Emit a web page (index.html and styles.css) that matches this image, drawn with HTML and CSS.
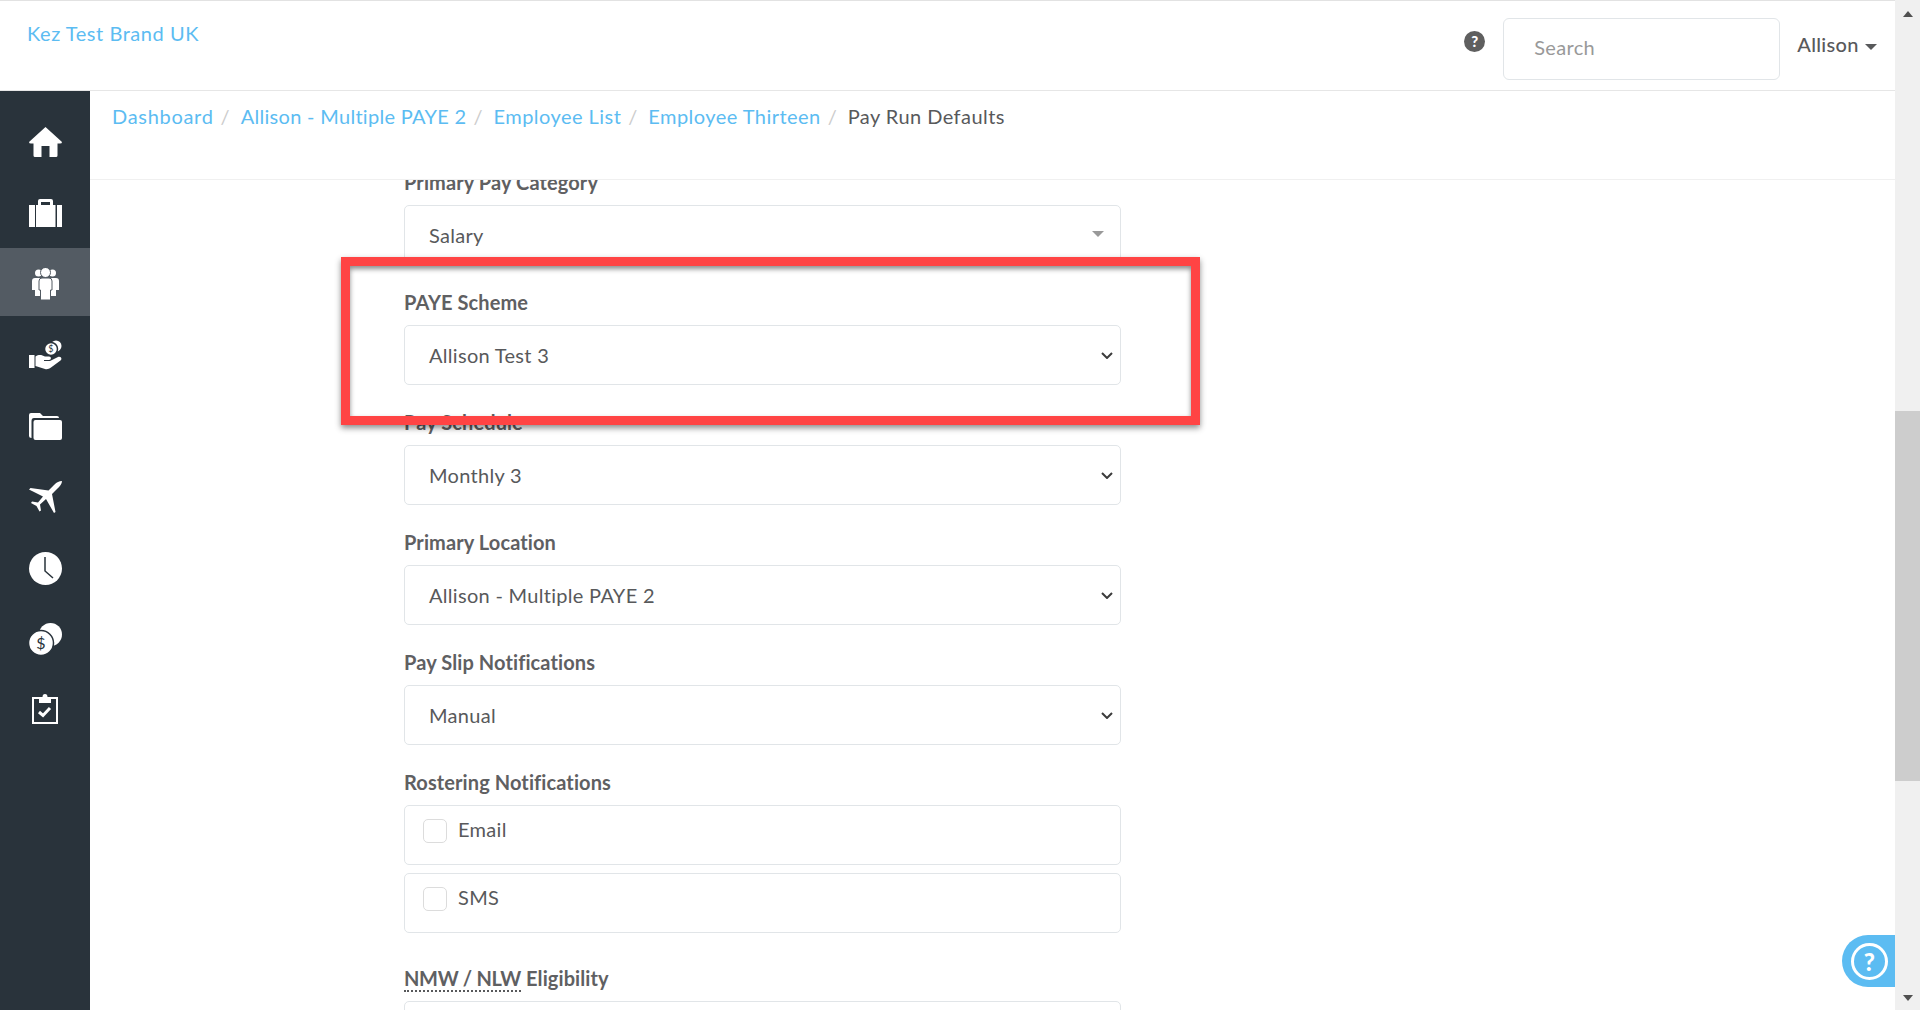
FILE: index.html
```html
<!DOCTYPE html>
<html lang="en">
<head>
  <meta charset="UTF-8">
  <title>Pay Run Defaults</title>
  <link rel="stylesheet" href="styles.css">
</head>
<body>
  <div class="app">
    <header class="topbar">
      <a class="brand">Kez Test Brand UK</a>
      <div class="topbar-right">
        <span class="help-dot">?</span>
        <div class="search">Search</div>
        <div class="user">Allison <span class="caret"></span></div>
      </div>
    </header>

    <div class="body-row">
      <nav class="sidebar">
        <a class="nav-item">
          <svg width="33" height="30" viewBox="0 0 33 30"><path d="M16.5 0 L33 15 Q33 16.5 31 16.5 H28.5 V28.5 Q28.5 30 27 30 H20.5 V19 H12.5 V30 H6 Q4.5 30 4.5 28.5 V16.5 H2 Q0 16.5 0 15 Z"/></svg>
        </a>
        <a class="nav-item">
          <svg width="33" height="28" viewBox="0 0 33 28"><rect x="0" y="6" width="6" height="22"/><rect x="28" y="6" width="5" height="22"/><rect x="7" y="6" width="19.500" height="22"/><path d="M9 6 V2 Q9 0 11 0 H22 Q24 0 24 2 V6 H21 V3 H12 V6 Z"/></svg>
        </a>
        <a class="nav-item active">
          <svg width="27" height="32" viewBox="0 0 27 32"><circle cx="6.500" cy="5" r="3.500"/><circle cx="20.500" cy="5" r="3.500"/><path d="M0 13 Q0 10 3 10 H24 Q27 10 27 13 V22 H24 V28 H3 V22 H0 Z"/><circle class="gap-active" cx="13.500" cy="4.500" r="5"/><path class="gap-active" d="M7 13 Q7 10 10 10 H17 Q20 10 20 13 V22 H18.500 V32 H8.500 V22 H7 Z"/></svg>
        </a>
        <a class="nav-item">
          <svg width="33" height="31" viewBox="0 0 33 31"><circle cx="27" cy="6" r="5.500"/><circle class="gap" cx="22" cy="9" r="6.500"/><text class="coin-small" x="22" y="12">$</text><rect x="0" y="15" width="5.500" height="13"/><path d="M6.500 16.500 C10 14 13 15 16 16.500 H20 C22.500 16.500 22.500 20 20 20 H15 V21 H21 L29 17 C32 16 33.500 19 31.500 20.500 L22 27.500 C20 29 18 29.500 16 29 L6.500 26 Z"/></svg>
        </a>
        <a class="nav-item">
          <svg width="33" height="27" viewBox="0 0 33 27"><path d="M0 2 Q0 0 2 0 H11 L14 3 H28 Q30 3 30 5 H5 Q2.500 5 2.500 8 V25 Q0 25 0 23 Z"/><path d="M4.500 9 Q4.500 7 6.500 7 H31 Q33 7 33 9 V25 Q33 27 31 27 H6.500 Q4.500 27 4.500 25 Z"/></svg>
        </a>
        <a class="nav-item">
          <svg width="33" height="32" viewBox="0 0 33 32"><path d="M33 0 C33 3 31 5 28 8 L23 13 L26.500 31 L25 32 L17 18 L11 23.500 L12 29.500 L10.500 30.500 L7.500 25 L2 22 L3 20.500 L9 21.500 L14 15.500 L0 8.500 L1.500 7 L19.500 9.500 L25 4 C28 1 30 0 33 0 Z"/></svg>
        </a>
        <a class="nav-item">
          <svg width="33" height="33" viewBox="0 0 33 33"><circle cx="16.500" cy="16.500" r="16.500"/><path class="hand" d="M16 5 V19 L24 26"/></svg>
        </a>
        <a class="nav-item">
          <svg width="33" height="32" viewBox="0 0 33 32"><circle cx="21.500" cy="11.500" r="11.500"/><circle class="gap" cx="12" cy="20" r="12.500"/><text class="coin-big" x="12" y="25.500">$</text></svg>
        </a>
        <a class="nav-item">
          <svg width="26" height="30" viewBox="0 0 26 30"><path class="clip-line" d="M7 4 H1 V29 H25 V4 H19"/><path d="M10.500 3 Q10.500 0 13 0 Q15.500 0 15.500 3 H19 V9 H7 V3 Z"/><path class="clip-line thick" d="M7 18 L11 21.500 L18 14"/></svg>
        </a>
      </nav>

      <main class="content">
        <div class="breadcrumb">
          <a class="crumb-wide">Dashboard</a><span class="sep">/</span>
          <a class="crumb-tight">Allison - Multiple PAYE 2</a><span class="sep">/</span>
          <a>Employee List</a><span class="sep">/</span>
          <a>Employee Thirteen</a><span class="sep">/</span>
          <span class="current">Pay Run Defaults</span>
        </div>

        <div class="form-scroll">
          <form class="defaults-form">
            <div class="field">
              <label>Primary Pay Category</label>
              <div class="select-box">
                <span>Salary</span>
                <span class="tri"></span>
              </div>
            </div>
            <div class="field">
              <label>PAYE Scheme</label>
              <div class="select-box">
                <span>Allison Test 3</span>
                <svg class="chev" width="12" height="7" viewBox="0 0 12 7"><path d="M1 1 L6 6 L11 1"/></svg>
              </div>
            </div>
            <div class="field">
              <label>Pay Schedule</label>
              <div class="select-box">
                <span>Monthly 3</span>
                <svg class="chev" width="12" height="7" viewBox="0 0 12 7"><path d="M1 1 L6 6 L11 1"/></svg>
              </div>
            </div>
            <div class="field">
              <label>Primary Location</label>
              <div class="select-box">
                <span>Allison - Multiple PAYE 2</span>
                <svg class="chev" width="12" height="7" viewBox="0 0 12 7"><path d="M1 1 L6 6 L11 1"/></svg>
              </div>
            </div>
            <div class="field">
              <label>Pay Slip Notifications</label>
              <div class="select-box">
                <span>Manual</span>
                <svg class="chev" width="12" height="7" viewBox="0 0 12 7"><path d="M1 1 L6 6 L11 1"/></svg>
              </div>
            </div>
            <div class="field field-checks">
              <label>Rostering Notifications</label>
              <div class="check-box"><span class="tick"></span>Email</div>
              <div class="check-box"><span class="tick"></span>SMS</div>
            </div>
            <div class="field">
              <label><abbr>NMW / NLW</abbr> Eligibility</label>
              <div class="select-box"></div>
            </div>
          </form>
        </div>

        <div class="highlight"></div>
      </main>
    </div>
  </div>

  <div class="scrollbar">
    <span class="arrow up"></span>
    <div class="track"><div class="thumb"></div></div>
    <span class="arrow down"></span>
  </div>

  <div class="help-tab"><span class="help-ring">?</span></div>
</body>
</html>
```

FILE: styles.css
```css
html, body {
  height: 100%;
}

body {
  margin: 0;
  display: flex;
  overflow: hidden;
  background: #fff;
  color: #58595b;
  font-family: 'Lato', 'Open Sans', sans-serif;
  font-size: 20px;
  letter-spacing: 0.3px;
}

.app {
  flex: 1;
  min-width: 0;
  display: flex;
  flex-direction: column;
  height: 100%;
}

a {
  color: #5cbcf2;
  text-decoration: none;
}

/* top bar */
.topbar {
  box-sizing: border-box;
  height: 91px;
  flex: none;
  display: flex;
  justify-content: space-between;
  border-top: 1px solid #e2e2e2;
  border-bottom: 1px solid #e6e6e6;
}

.brand {
  margin: 18px 0 0 27px;
  line-height: 28px;
  letter-spacing: 0.55px;
}

.topbar-right {
  display: flex;
  align-items: flex-start;
}

.help-dot {
  width: 21px;
  height: 21px;
  margin-top: 30px;
  border-radius: 50%;
  background: #5f5f5f;
  color: #fff;
  font-size: 15px;
  font-weight: 900;
  line-height: 21px;
  text-align: center;
}

.search {
  box-sizing: border-box;
  width: 277px;
  height: 62px;
  margin: 17px 0 0 18px;
  padding-left: 30px;
  border: 1px solid #e1e5e8;
  border-radius: 6px;
  color: #999;
  line-height: 56px;
}

.user {
  margin: 29px 18px 0 17px;
  line-height: 28px;
  font-weight: 500;
}

.caret {
  display: inline-block;
  margin-left: 1px;
  vertical-align: middle;
  border-top: 6px solid #58595b;
  border-left: 6px solid transparent;
  border-right: 6px solid transparent;
}

/* sidebar */
.body-row {
  flex: 1;
  min-height: 0;
  display: flex;
}

.sidebar {
  flex: none;
  box-sizing: border-box;
  width: 90px;
  padding-top: 15px;
  display: flex;
  flex-direction: column;
  gap: 3px;
  background: #29333b;
}

.nav-item {
  box-sizing: border-box;
  height: 68px;
  padding-top: 4px;
  display: flex;
  align-items: center;
  justify-content: center;
}

.nav-item:last-child svg {
  margin-top: -2px;
}

.nav-item.active {
  background: #535b63;
}

.nav-item svg {
  fill: #fff;
}

.nav-item .gap {
  stroke: #29333b;
  stroke-width: 1.5;
}

.nav-item .gap-active {
  stroke: #535b63;
  stroke-width: 1;
}

.nav-item .hand {
  fill: none;
  stroke: #29333b;
  stroke-width: 1.5;
}

.nav-item .clip-line {
  fill: none;
  stroke: #fff;
  stroke-width: 2;
}

.nav-item .clip-line.thick {
  stroke-width: 3;
}

.coin-small, .coin-big {
  fill: #29333b;
  text-anchor: middle;
  font-family: 'Lato', sans-serif;
}

.coin-small {
  font-size: 9px;
}

.coin-big {
  font-size: 16px;
}

/* content */
.content {
  position: relative;
  flex: 1;
  min-width: 0;
  display: flex;
  flex-direction: column;
}

.breadcrumb {
  box-sizing: border-box;
  flex: none;
  height: 89px;
  padding: 11px 0 0 22px;
  border-bottom: 1px solid #f0f0f0;
  line-height: 28px;
  letter-spacing: 0.45px;
  white-space: nowrap;
}

.crumb-wide {
  letter-spacing: 0.7px;
}

.crumb-tight {
  letter-spacing: 0.3px;
}

.sep {
  margin: 0 5px 0 7px;
  color: #ccc;
}

.current {
  color: #58595b;
}

.form-scroll {
  flex: 1;
  min-height: 0;
  overflow: hidden;
}

.defaults-form {
  width: 717px;
  margin: -13px 0 0 314px;
}

.field {
  margin-bottom: 22px;
}

.field label {
  display: block;
  margin-bottom: 8px;
  line-height: 30px;
  font-weight: 700;
  color: #5f6062;
  letter-spacing: 0.1px;
}

.field-checks {
  margin-bottom: 30px;
}

abbr {
  border-bottom: 2px dotted #58595b;
  letter-spacing: -0.3px;
}

.select-box, .check-box {
  box-sizing: border-box;
  height: 60px;
  border: 1px solid #e1e5e8;
  border-radius: 5px;
}

.select-box {
  display: flex;
  align-items: center;
  justify-content: space-between;
  padding: 0 7px 0 24px;
}

.tri {
  margin-right: 9px;
  margin-top: -2px;
  border-top: 6px solid #999;
  border-left: 6px solid transparent;
  border-right: 6px solid transparent;
}

.chev {
  fill: none;
  stroke: #3c3c3c;
  stroke-width: 2;
}

.check-box {
  display: flex;
  align-items: flex-start;
  padding: 13px 0 0 18px;
  line-height: 20px;
}

.check-box + .check-box {
  margin-top: 8px;
}

.tick {
  box-sizing: border-box;
  width: 24px;
  height: 24px;
  margin-right: 11px;
  border: 1px solid #dcdcdc;
  border-radius: 5px;
}

/* annotation drawn over the form */
.highlight {
  position: absolute;
  top: 166px;
  left: 251px;
  box-sizing: border-box;
  width: 859px;
  height: 168px;
  border: 9px solid #ff4444;
  box-shadow: 0 3px 6px rgba(0, 0, 0, 0.45), inset 0 3px 5px rgba(0, 0, 0, 0.45);
}

/* scrollbar */
.scrollbar {
  flex: none;
  width: 25px;
  height: 100%;
  display: flex;
  flex-direction: column;
  align-items: center;
  background: #f0f0f0;
}

.arrow {
  flex: none;
  width: 0;
  border-left: 5.5px solid transparent;
  border-right: 5.5px solid transparent;
}

.arrow.up {
  margin-top: 11px;
  border-bottom: 6px solid #505050;
}

.arrow.down {
  margin-bottom: 9px;
  border-top: 6px solid #505050;
}

.track {
  flex: 1;
  width: 100%;
  padding-top: 394px;
  box-sizing: border-box;
}

.thumb {
  height: 370px;
  background: #cdcdcd;
}

/* floating help */
.help-tab {
  position: absolute;
  right: 25px;
  top: 935px;
  width: 53px;
  height: 52px;
  display: flex;
  align-items: center;
  padding-left: 9px;
  box-sizing: border-box;
  border-radius: 26px 0 0 26px;
  background: #5cbcf2;
}

.help-ring {
  box-sizing: border-box;
  width: 37px;
  height: 37px;
  border: 3px solid #fff;
  border-radius: 50%;
  color: #fff;
  font-size: 24px;
  font-weight: 900;
  line-height: 31px;
  text-align: center;
}
```
